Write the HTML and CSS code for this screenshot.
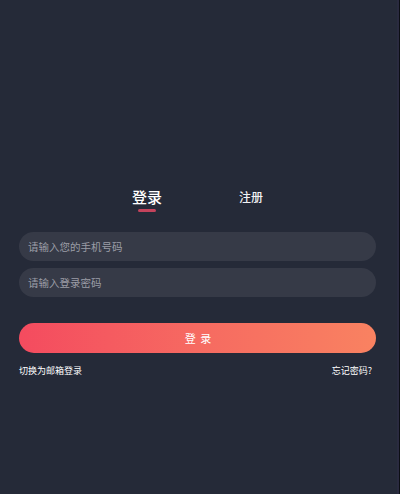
FILE: index.html
```html
<!DOCTYPE html>
<html lang="zh-CN">
<head>
<meta charset="utf-8">
<title>登录</title>
<link rel="stylesheet" href="styles.css">
</head>
<body>
<div class="page">
  <div class="tabs">
    <div class="tab active"><span class="tab-label">登录</span><span class="tab-line"></span></div>
    <div class="tab"><span class="tab-label">注册</span></div>
  </div>
  <form class="form">
    <div class="field"><span class="placeholder">请输入您的手机号码</span></div>
    <div class="field"><span class="placeholder">请输入登录密码</span></div>
    <div class="btn">登 录</div>
    <div class="links">
      <span class="link">切换为邮箱登录</span>
      <span class="link">忘记密码?</span>
    </div>
  </form>
</div>
</body>
</html>
```
FILE: styles.css
```css
html, body {
  margin: 0;
  padding: 0;
  background: #252a38;
}
body {
  font-family: "Noto Sans CJK SC", "Noto Sans", sans-serif;
  color: #ffffff;
}
.page {
  box-sizing: border-box;
  width: 400px;
  height: 494px;
  padding-top: 187px;
  background: #252a38;
  border-right: 1px solid #0c0e14;
  box-shadow: inset -2px 0 0 #2a2b40;
}
.tabs {
  display: flex;
  justify-content: center;
  margin-left: -1px;
}
.tab {
  width: 104px;
  display: flex;
  flex-direction: column;
  align-items: center;
  height: 26px;
}
.tab-label {
  font-size: 12px;
  line-height: 20px;
  color: #f2f2f4;
  font-weight: 500;
}
.tab.active .tab-label {
  font-size: 15px;
  color: #ffffff;
}
.tab-line {
  margin-top: 2px;
  width: 18px;
  height: 3px;
  border-radius: 2px;
  background: #c4435c;
}
.form {
  margin: 19px 23px 0 19px;
  display: flex;
  flex-direction: column;
}
.field {
  height: 29px;
  border-radius: 15px;
  background: #363a47;
  display: flex;
  align-items: center;
  padding-left: 9px;
  margin-bottom: 7px;
}
.placeholder {
  font-size: 10.5px;
  color: #9b9da6;
}
.btn {
  margin-top: 19px;
  height: 30px;
  border-radius: 15px;
  background: linear-gradient(90deg, #f44b5f 0%, #f66a61 50%, #f98261 100%);
  display: flex;
  align-items: center;
  justify-content: center;
  padding-left: 2px;
  font-size: 11px;
  letter-spacing: 1px;
  color: #ffffff;
}
.links {
  display: flex;
  justify-content: space-between;
  margin-top: 12px;
  padding-right: 4px;
}
.link {
  font-size: 9px;
  line-height: 12px;
  color: #ffffff;
}
```
